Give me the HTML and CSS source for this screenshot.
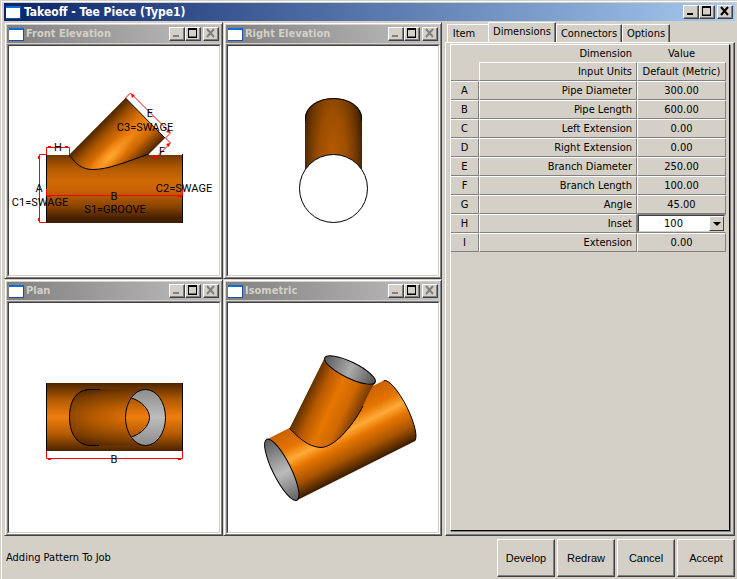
FILE: index.html
```html
<!DOCTYPE html>
<html lang="en">
<head>
    <meta charset="UTF-8">
    <title>Takeoff - Tee Piece (Type1)</title>
    <link rel="stylesheet" href="styles.css">
</head>
<body>
<div class="window">
    <header class="titlebar">
        <span class="app-icon"></span>
        <h1>Takeoff - Tee Piece (Type1)</h1>
        <button class="ctl" aria-label="Minimize"><svg width="12" height="10"><path d="M2 8h6" /></svg></button>
        <button class="ctl" aria-label="Maximize"><svg width="12" height="10"><path d="M1 1h9M1 9.5h9" /><path class="thin" d="M1.5 1v9M9.5 1v9M1 9.5h9" /></svg></button>
        <button class="ctl close" aria-label="Close"><svg width="12" height="10"><path class="cross" d="M2 1l7 8M9 1l-7 8" /></svg></button>
    </header>

    <main class="main">
        <div class="views">
            <!-- front elevation -->
            <section class="view">
                <header class="titlebar inactive">
                    <span class="app-icon"></span>
                    <h2>Front Elevation</h2>
                    <button class="ctl" aria-label="Minimize"><svg width="12" height="10"><path class="dim" d="M2 8h6" /></svg></button>
                    <button class="ctl" aria-label="Maximize"><svg width="12" height="10"><path d="M1 1h9M1 9.5h9" /><path class="thin" d="M1.5 1v9M9.5 1v9M1 9.5h9" /></svg></button>
                    <button class="ctl close" aria-label="Close" disabled><svg width="12" height="10"><path class="cross dim" d="M2 1l7 8M9 1l-7 8" /></svg></button>
                </header>
                <div class="canvas">
                    <svg viewBox="9 46 210 229">
                        <defs>
                            <linearGradient id="f-main" x1="0" y1="0" x2="0" y2="1">
                                <stop offset="0" stop-color="#743900" />
                                <stop offset=".2" stop-color="#b45a02" />
                                <stop offset=".38" stop-color="#d06a06" />
                                <stop offset=".52" stop-color="#c86304" />
                                <stop offset=".75" stop-color="#8c4500" />
                                <stop offset=".92" stop-color="#482300" />
                                <stop offset="1" stop-color="#3c1d00" />
                            </linearGradient>
                            <linearGradient id="f-branch" gradientUnits="userSpaceOnUse" x1="97" y1="126" x2="137" y2="166">
                                <stop offset="0" stop-color="#4a2400" />
                                <stop offset=".22" stop-color="#a85400" />
                                <stop offset=".42" stop-color="#e27406" />
                                <stop offset=".55" stop-color="#f08414" />
                                <stop offset=".75" stop-color="#cc6600" />
                                <stop offset="1" stop-color="#4a2400" />
                            </linearGradient>
                            <radialGradient id="f-shine" gradientUnits="userSpaceOnUse" cx="0" cy="0" r="1" gradientTransform="translate(110 157) rotate(-45) scale(32 10)">
                                <stop offset="0" stop-color="#ffa733" />
                                <stop offset="1" stop-color="#ff9a20" stop-opacity="0" />
                            </radialGradient>
                        </defs>
                        <rect x="46" y="155" width="136" height="68" fill="url(#f-main)" />
                        <path class="edge" d="M46.500 154v69M182.500 154v69" />
                        <path d="M69 155L125.500 98L165 138L149 154C128 161 108 170 92 169.500C82 169 77 165 69 155z" fill="url(#f-branch)" />
                        <path d="M69 155L125.500 98L165 138L149 154C128 161 108 170 92 169.500C82 169 77 165 69 155z" fill="url(#f-shine)" />
                        <path class="edge" d="M125.500 98L165 138M149 154C128 161 108 170 92 169.500C82 169 77 165 69 155" />
                        <path class="measure" d="M125.500 98l5-5l40 40l-5 5l5 5l-16 16l-4-4M46.500 155v-7.500h23v7.500M46 154.500h-6.500v68h7M46.500 189v7M46 195.500h136M182.500 189v7" />
                        <path class="arrow" d="M131 94l4 1l-3 3zM170 133l-4-1l3-3zM170 143l-1 4l-3-3zM154 159l1-4l3 3zM48 146h3v1h-3zM65 146h3v1h-3zM38 156h2v3h-2zM38 218h2v3h-2zM48 195h3v2h-3zM178 195h3v2h-3z" />
                        <g class="label">
                            <text x="58" y="151">H</text>
                            <text x="39" y="192">A</text>
                            <text x="40" y="206">C1=SWAGE</text>
                            <text x="114" y="200">B</text>
                            <text x="115" y="213">S1=GROOVE</text>
                            <text x="184" y="192">C2=SWAGE</text>
                            <text x="145" y="131">C3=SWAGE</text>
                            <text x="150" y="117">E</text>
                            <text x="162" y="155">F</text>
                        </g>
                    </svg>
                </div>
            </section>

            <!-- right elevation -->
            <section class="view">
                <header class="titlebar inactive">
                    <span class="app-icon"></span>
                    <h2>Right Elevation</h2>
                    <button class="ctl" aria-label="Minimize"><svg width="12" height="10"><path class="dim" d="M2 8h6" /></svg></button>
                    <button class="ctl" aria-label="Maximize"><svg width="12" height="10"><path d="M1 1h9M1 9.5h9" /><path class="thin" d="M1.5 1v9M9.5 1v9M1 9.5h9" /></svg></button>
                    <button class="ctl close" aria-label="Close" disabled><svg width="12" height="10"><path class="cross dim" d="M2 1l7 8M9 1l-7 8" /></svg></button>
                </header>
                <div class="canvas">
                    <svg viewBox="228 46 210 229">
                        <defs>
                            <radialGradient id="r-branch" gradientUnits="userSpaceOnUse" cx="0" cy="0" r="1" gradientTransform="translate(333 160) scale(31 110)">
                                <stop offset="0" stop-color="#b85b00" />
                                <stop offset=".45" stop-color="#9c4e00" />
                                <stop offset=".75" stop-color="#713800" />
                                <stop offset="1" stop-color="#3c1e00" />
                            </radialGradient>
                        </defs>
                        <path d="M305 170V118A28.500 20 0 0 1 362 118V170z" fill="url(#r-branch)" />
                        <path class="edge" d="M305.500 121V118A28 19.500 0 0 1 361.500 118V121" />
                        <circle class="edge" cx="333.500" cy="188.500" r="34" fill="#fff" />
                    </svg>
                </div>
            </section>

            <!-- plan -->
            <section class="view">
                <header class="titlebar inactive">
                    <span class="app-icon"></span>
                    <h2>Plan</h2>
                    <button class="ctl" aria-label="Minimize"><svg width="12" height="10"><path class="dim" d="M2 8h6" /></svg></button>
                    <button class="ctl" aria-label="Maximize"><svg width="12" height="10"><path d="M1 1h9M1 9.5h9" /><path class="thin" d="M1.5 1v9M9.5 1v9M1 9.5h9" /></svg></button>
                    <button class="ctl close" aria-label="Close" disabled><svg width="12" height="10"><path class="cross dim" d="M2 1l7 8M9 1l-7 8" /></svg></button>
                </header>
                <div class="canvas">
                    <svg viewBox="9 303 210 229">
                        <defs>
                            <linearGradient id="p-main" gradientUnits="userSpaceOnUse" x1="0" y1="383" x2="0" y2="451">
                                <stop offset="0" stop-color="#4a2500" />
                                <stop offset=".25" stop-color="#b45a00" />
                                <stop offset=".5" stop-color="#f07e10" />
                                <stop offset=".75" stop-color="#b45a00" />
                                <stop offset="1" stop-color="#4a2500" />
                            </linearGradient>
                            <radialGradient id="p-branch" gradientUnits="userSpaceOnUse" cx="0" cy="0" r="1" gradientTransform="translate(138 417) scale(110 32)">
                                <stop offset="0" stop-color="#e87506" />
                                <stop offset=".4" stop-color="#b45a00" />
                                <stop offset=".75" stop-color="#7d3e00" />
                                <stop offset="1" stop-color="#4a2500" />
                            </radialGradient>
                            <linearGradient id="p-bore" x1="0" y1="0" x2="0" y2="1">
                                <stop offset="0" stop-color="#8c8c8c" />
                                <stop offset=".5" stop-color="#bdbdbd" />
                                <stop offset="1" stop-color="#8c8c8c" />
                            </linearGradient>
                        </defs>
                        <rect x="46" y="383" width="136" height="68" fill="url(#p-main)" />
                        <path class="edge" d="M46.500 383v68M182.500 383v68" />
                        <path d="M145 389H88C74 391 69 404 69 417S74 443 88 445.500H145z" fill="url(#p-branch)" />
                        <path class="edge" d="M100 389.500H88C74 391 69.500 404 69.500 417S74 443 88 445.500H99" />
                        <ellipse cx="145.500" cy="417.500" rx="20" ry="28" fill="url(#p-bore)" />
                        <path d="M131.500 398C141 401 149.500 409 149.500 417.500S141 434 131.500 437C123 426 123 409 131.500 398z" fill="url(#p-main)" />
                        <path class="edge" d="M131.500 398C141 401 149.500 409 149.500 417.500S141 434 131.500 437" />
                        <ellipse class="edge" cx="145.500" cy="417.500" rx="20" ry="28" />
                        <path class="measure" d="M46.500 451v7.500h136V451" />
                        <path class="arrow" d="M48 458h3v2h-3zM178 458h3v2h-3z" />
                        <g class="label">
                            <text x="114" y="463">B</text>
                        </g>
                    </svg>
                </div>
            </section>

            <!-- isometric -->
            <section class="view">
                <header class="titlebar inactive">
                    <span class="app-icon"></span>
                    <h2>Isometric</h2>
                    <button class="ctl" aria-label="Minimize"><svg width="12" height="10"><path class="dim" d="M2 8h6" /></svg></button>
                    <button class="ctl" aria-label="Maximize"><svg width="12" height="10"><path d="M1 1h9M1 9.5h9" /><path class="thin" d="M1.5 1v9M9.5 1v9M1 9.5h9" /></svg></button>
                    <button class="ctl close" aria-label="Close" disabled><svg width="12" height="10"><path class="cross dim" d="M2 1l7 8M9 1l-7 8" /></svg></button>
                </header>
                <div class="canvas">
                    <svg viewBox="228 303 210 229">
                        <defs>
                            <linearGradient id="i-main" gradientUnits="userSpaceOnUse" x1="267" y1="439.400" x2="297.400" y2="500">
                                <stop offset="0" stop-color="#c86200" />
                                <stop offset=".25" stop-color="#e67400" />
                                <stop offset=".42" stop-color="#ffaa38" />
                                <stop offset=".56" stop-color="#e87600" />
                                <stop offset=".78" stop-color="#a85400" />
                                <stop offset="1" stop-color="#3a1c00" />
                            </linearGradient>
                            <linearGradient id="i-branch" gradientUnits="userSpaceOnUse" x1="306" y1="393" x2="357" y2="417">
                                <stop offset="0" stop-color="#5a2c00" />
                                <stop offset=".25" stop-color="#b85a00" />
                                <stop offset=".5" stop-color="#e67600" />
                                <stop offset=".75" stop-color="#d06800" />
                                <stop offset="1" stop-color="#7a3c00" />
                            </linearGradient>
                            <linearGradient id="i-bore" gradientUnits="userSpaceOnUse" x1="0" y1="0" x2="1" y2="0" gradientTransform="translate(247.800 469.800) scale(68 1)">
                                <stop offset="0" stop-color="#5c5c5c" />
                                <stop offset=".55" stop-color="#bcbcbc" />
                                <stop offset="1" stop-color="#606060" />
                            </linearGradient>
                            <linearGradient id="i-bore2" gradientUnits="userSpaceOnUse" x1="322" y1="370" x2="378" y2="370">
                                <stop offset="0" stop-color="#585858" />
                                <stop offset=".5" stop-color="#acacac" />
                                <stop offset="1" stop-color="#505050" />
                            </linearGradient>
                        </defs>
                        <path d="M266.600 439.400L383.800 380.600A34 9 63.500 0 1 414.200 441.400L297 500.200z" fill="url(#i-main)" />
                        <path class="edge" d="M383.800 380.600A34 9 63.500 0 1 414.200 441.400" />
                        <ellipse class="edge" cx="281.800" cy="469.800" rx="34" ry="9" transform="rotate(63.500 281.800 469.800)" fill="url(#i-bore)" />
                        <path d="M289.500 428.500L324.500 358L375.500 383C369 390 366 402 358 415C348 431 335 447 321 447.500C308 447 298 437 289.500 428.500z" fill="url(#i-branch)" />
                        <path class="edge" d="M363 406C355 422 336 447 321 447.500C308 447 298 437 289.500 428.500" />
                        <ellipse class="edge" cx="350" cy="370" rx="28" ry="8" transform="rotate(26 350 370)" fill="url(#i-bore2)" />
                    </svg>
                </div>
            </section>
        </div>

        <div class="side">
            <div class="tabs" role="tablist">
                <button class="tab tab-item" role="tab">Item</button>
                <button class="tab active" role="tab" aria-selected="true">Dimensions</button>
                <button class="tab" role="tab">Connectors</button>
                <button class="tab" role="tab">Options</button>
            </div>
            <div class="tab-page" role="tabpanel">
                <div class="list">
                    <table class="dims">
                        <thead>
                            <tr class="head"><th class="key" rowspan="2"></th><th class="name">Dimension</th><th class="value">Value</th></tr>
                            <tr><td class="name">Input Units</td><td class="value">Default (Metric)</td></tr>
                        </thead>
                        <tbody>
                            <tr><td class="key">A</td><td class="name">Pipe Diameter</td><td class="value">300.00</td></tr>
                            <tr><td class="key">B</td><td class="name">Pipe Length</td><td class="value">600.00</td></tr>
                            <tr><td class="key">C</td><td class="name">Left Extension</td><td class="value">0.00</td></tr>
                            <tr><td class="key">D</td><td class="name">Right Extension</td><td class="value">0.00</td></tr>
                            <tr><td class="key">E</td><td class="name">Branch Diameter</td><td class="value">250.00</td></tr>
                            <tr><td class="key">F</td><td class="name">Branch Length</td><td class="value">100.00</td></tr>
                            <tr><td class="key">G</td><td class="name">Angle</td><td class="value">45.00</td></tr>
                            <tr>
                                <td class="key">H</td>
                                <td class="name"><label for="inset">Inset</label></td>
                                <td class="value editing">
                                    <div class="combo">
                                        <select id="inset"><option>100</option></select>
                                        <span class="drop"></span>
                                    </div>
                                </td>
                            </tr>
                            <tr><td class="key">I</td><td class="name">Extension</td><td class="value">0.00</td></tr>
                        </tbody>
                    </table>
                </div>
            </div>
        </div>
    </main>

    <footer class="footer">
        <span class="status">Adding Pattern To Job</span>
        <button class="btn">Develop</button>
        <button class="btn">Redraw</button>
        <button class="btn">Cancel</button>
        <button class="btn">Accept</button>
    </footer>
</div>
</body>
</html>
```
FILE: styles.css
```css
* { box-sizing: border-box; }
body { margin: 0; background: #d4d0c8; color: #000; font: 11px "DejaVu Sans Condensed", Tahoma, "DejaVu Sans", sans-serif; }
button, select { font: inherit; color: inherit; background: #d4d0c8; padding: 0; margin: 0; border-radius: 0; }

.window { display: flex; flex-direction: column; min-height: 100vh; padding: 3px 2px 2px 4px; box-shadow: inset 1px 1px #d4d0c8, inset 2px 2px #fff; }

/* title bars */
.titlebar { display: flex; align-items: center; height: 18px; padding: 0 2px; background: linear-gradient(to right, #0a246a, #a6caf0); color: #fff; }
.titlebar h1, .titlebar h2 { flex: 1; margin: 0 0 0 3px; font-size: 12px; line-height: 18px; font-weight: bold; white-space: nowrap; }
.titlebar h2 { margin-left: 2px; font-size: 11px; }
.inactive { padding-right: 1px; background: linear-gradient(to right, #808080, #c0c0c0); color: #d4d0c8; }
.app-icon { width: 15px; height: 13px; background: #fffffa; border: solid #1a4fa8; border-width: 2px 1px 1px 0; border-top-color: #0a6cd8; }
.ctl { width: 16px; height: 14px; display: flex; justify-content: center; border: 1px solid; border-color: #fff #404040 #404040 #fff; box-shadow: inset -1px -1px #808080; }
.ctl.close { margin-left: 2px; }
.ctl path { fill: none; stroke: #000; stroke-width: 2; }
.ctl .thin { stroke-width: 1; }
.ctl .dim { stroke: #808080; }

/* drawing views */
.main { flex: 1; display: grid; grid-template-columns: minmax(0, 1fr) 290px; gap: 3px; margin-top: 1px; }
.views { display: grid; grid-template-columns: 1fr 1fr; grid-template-rows: 1fr 1fr; }
.view { display: flex; flex-direction: column; min-width: 0; padding: 1px; border: 1px solid; border-color: #d4d0c8 #404040 #404040 #d4d0c8; box-shadow: inset 1px 1px #fff, inset -1px -1px #808080; }
.view .titlebar { margin: 1px; }
.canvas { flex: 1; display: flex; margin-left: 1px; background: #fff; border: 1px solid; border-color: #808080 #fff #fff #808080; }
.canvas svg { width: 100%; min-height: 0; flex: 1; border: 1px solid; border-color: #404040 #d4d0c8 #d4d0c8 #404040; }
.edge { stroke: #000; stroke-width: 1; }
.edge:not([fill]) { fill: none; }
.measure { fill: none; stroke: #f00; stroke-width: 1; }
.arrow { fill: #f00; }
.label { font: 11px Roboto, "Liberation Sans", sans-serif; text-anchor: middle; }

/* tabs */
.side { display: flex; flex-direction: column; }
.tabs { display: flex; align-items: flex-end; height: 20px; padding-left: 2px; }
.tab { height: 18px; width: 66px; border: 1px solid; border-color: #fff #404040 transparent #fff; border-bottom: 0; box-shadow: inset -1px 0 #808080; }
.tab-item { width: 41px; padding-right: 8px; border-right: 0; box-shadow: none; }
.tab:last-child { width: 48px; }
.tab.active { height: 21px; width: 68px; margin-bottom: -1px; padding-bottom: 3px; }
.tab-page { flex: 1; display: flex; padding: 1px 4px 4px; border: 1px solid; border-color: #fff #404040 #404040 #fff; box-shadow: inset -1px -1px #808080; }
.list { flex: 1; border: 1px solid; border-color: #fff #000 #000 #fff; box-shadow: 1px 1px #808080; }

/* dimension table */
.dims { width: 275px; border-collapse: separate; border-spacing: 0; table-layout: fixed; }
.dims th, .dims td { height: 19px; padding: 0; font-weight: normal; border: 1px solid; border-color: #fff #808080 #808080 #fff; }
.dims .head th { height: 17px; border-color: transparent; }
.dims .key { width: 28px; text-align: center; border-left: 0; }
.dims .head .key { border-bottom-color: #808080; }
.dims .name { width: 158px; padding-right: 4px; text-align: right; }
.dims .value { width: 89px; text-align: center; }
.dims .editing { border-color: #808080; border-right-color: #d4d0c8; }
.combo { position: relative; height: 17px; }
.combo select { display: block; appearance: none; width: 100%; height: 17px; padding: 0 16px 0 0; text-align: center; text-align-last: center; background: #fff; border: 1px solid; border-color: #404040 #d4d0c8 #d4d0c8 #404040; }
.drop { position: absolute; right: 1px; top: 1px; width: 15px; height: 15px; background: #d4d0c8; border: 1px solid; border-color: #fff #404040 #404040 #fff; pointer-events: none; }
.drop::after { content: ""; display: block; margin: 5px auto 0; width: 0; border: 4px solid transparent; border-top-color: #000; border-bottom: 0; }

/* footer */
.footer { display: flex; align-items: flex-end; gap: 2px; height: 41px; padding-left: 2px; }
.status { flex: 1; line-height: 38px; }
.btn { width: 58px; height: 38px; font: 11px "Liberation Sans", Arial, sans-serif; border: 1px solid; border-color: #fff #404040 #404040 #fff; box-shadow: inset -1px -1px #808080; }
```
